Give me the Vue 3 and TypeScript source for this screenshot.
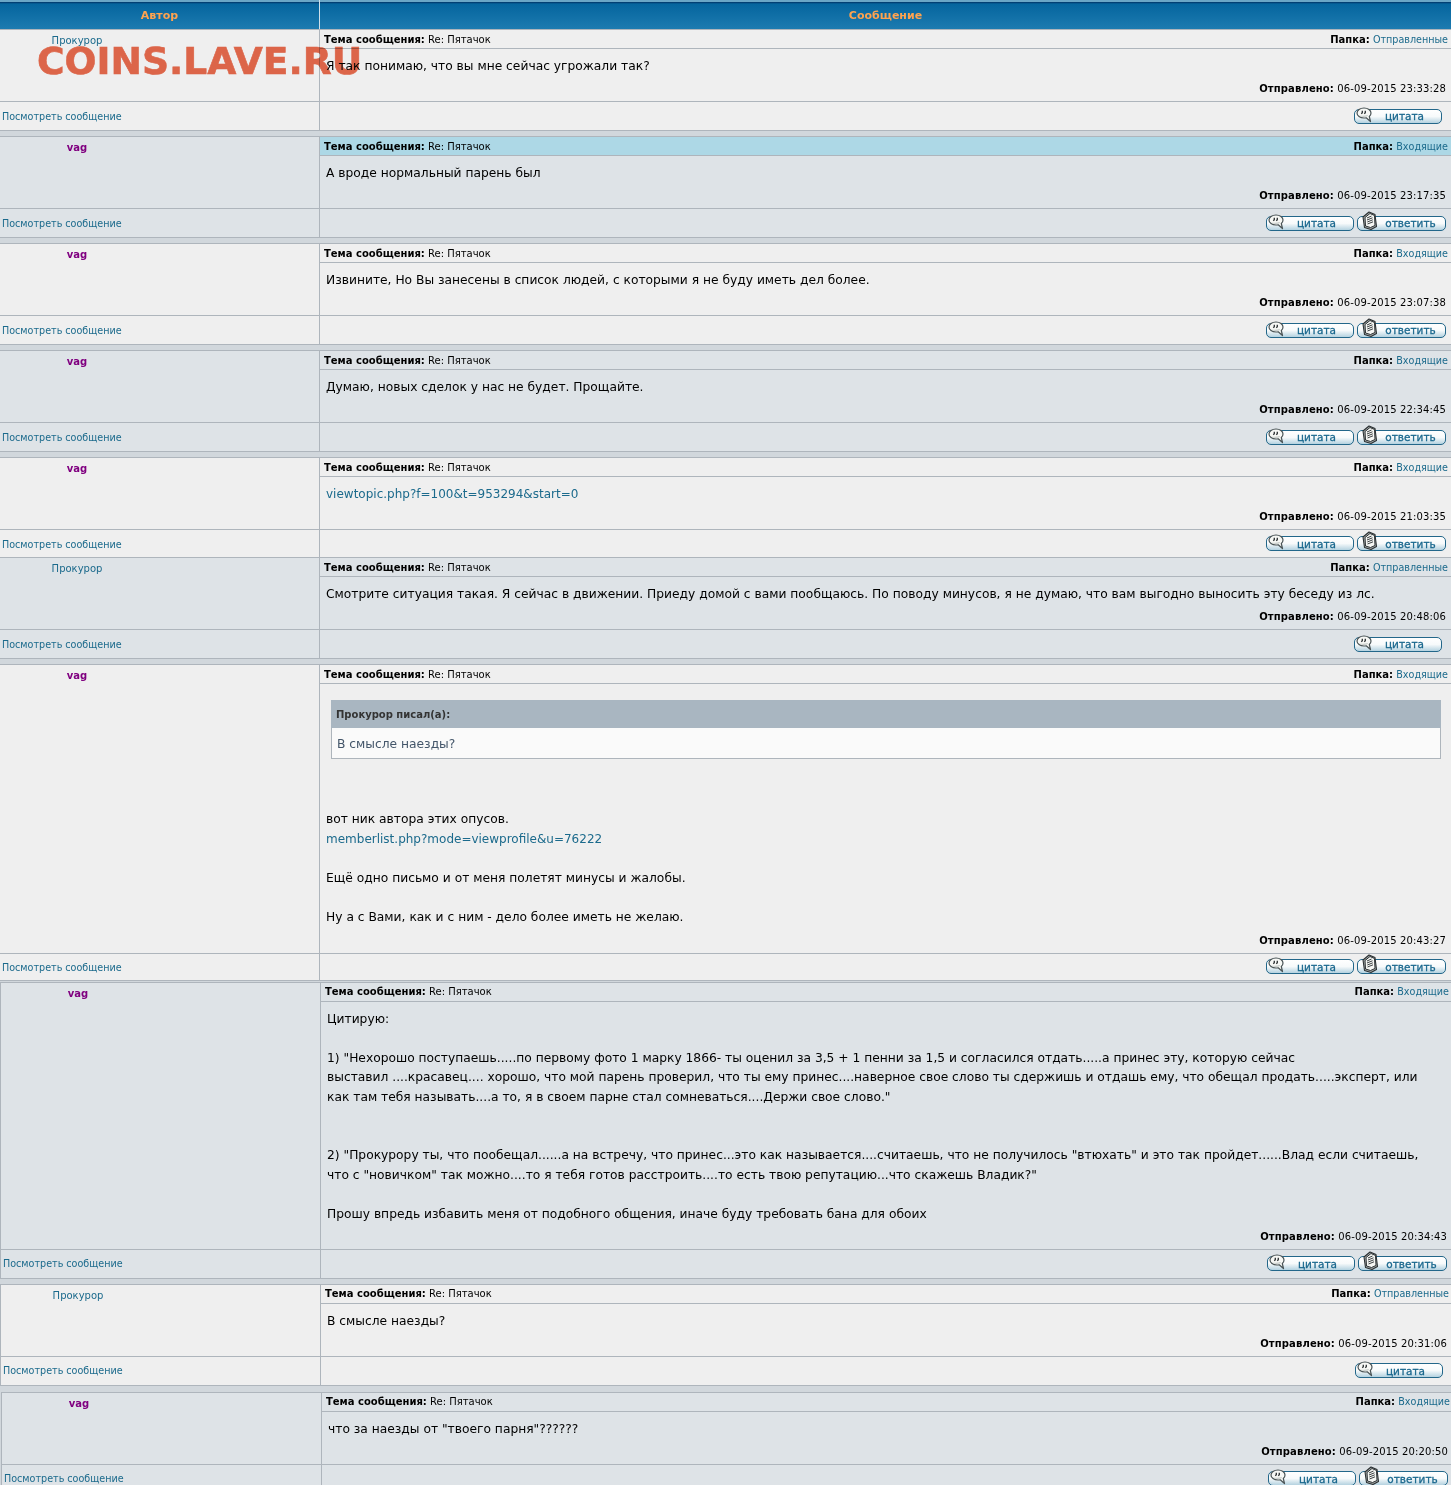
<script setup lang="ts">
interface Block { kind: 'text' | 'link' | 'quote'; text: string; author?: string }
interface Post {
  author: string; bot: boolean; folder: string; sent: string; blocks: Block[];
  reply: boolean; cls?: string; hl?: boolean;
}
const t = (text: string): Block => ({ kind: 'text', text })
const l = (text: string): Block => ({ kind: 'link', text })

const posts: Post[] = [
  { author: 'Прокурор', bot: false, folder: 'Отправленные', sent: '06-09-2015 23:33:28', reply: false, cls: 'light spaced', blocks: [t('Я так понимаю, что вы мне сейчас угрожали так?')] },
  { author: 'vag', bot: true, folder: 'Входящие', sent: '06-09-2015 23:17:35', reply: true, hl: true, cls: 'dark spaced', blocks: [t('А вроде нормальный парень был')] },
  { author: 'vag', bot: true, folder: 'Входящие', sent: '06-09-2015 23:07:38', reply: true, cls: 'light spaced', blocks: [t('Извините, Но Вы занесены в список людей, с которыми я не буду иметь дел более.')] },
  { author: 'vag', bot: true, folder: 'Входящие', sent: '06-09-2015 22:34:45', reply: true, cls: 'dark spaced', blocks: [t('Думаю, новых сделок у нас не будет. Прощайте.')] },
  { author: 'vag', bot: true, folder: 'Входящие', sent: '06-09-2015 21:03:35', reply: true, cls: 'light short', blocks: [l('viewtopic.php?f=100&t=953294&start=0')] },
  { author: 'Прокурор', bot: false, folder: 'Отправленные', sent: '06-09-2015 20:48:06', reply: false, cls: 'dark joined spaced', blocks: [t('Смотрите ситуация такая. Я сейчас в движении. Приеду домой с вами пообщаюсь. По поводу минусов, я не думаю, что вам выгодно выносить эту беседу из лс.')] },
  { author: 'vag', bot: true, folder: 'Входящие', sent: '06-09-2015 20:43:27', reply: true, cls: 'light tall', blocks: [
    { kind: 'quote', author: 'Прокурор писал(а):', text: 'В смысле наезды?' },
    t('вот ник автора этих опусов.'),
    l('memberlist.php?mode=viewprofile&u=76222'),
    t('\nЕщё одно письмо и от меня полетят минусы и жалобы.\n\nНу а с Вами, как и с ним - дело более иметь не желаю.'),
  ] },
  { author: 'vag', bot: true, folder: 'Входящие', sent: '06-09-2015 20:34:43', reply: true, cls: 'dark shift1 spaced', blocks: [
    t('Цитирую:\n\n1) "Нехорошо поступаешь.....по первому фото 1 марку 1866- ты оценил за 3,5 + 1 пенни за 1,5 и согласился отдать.....а принес эту, которую сейчас\nвыставил ....красавец.... хорошо, что мой парень проверил, что ты ему принес....наверное свое слово ты сдержишь и отдашь ему, что обещал продать.....эксперт, или\nкак там тебя называть....а то, я в своем парне стал сомневаться....Держи свое слово."\n\n\n2) "Прокурору ты, что пообещал......а на встречу, что принес...это как называется....считаешь, что не получилось "втюхать" и это так пройдет......Влад если считаешь,\nчто с "новичком" так можно....то я тебя готов расстроить....то есть твою репутацию...что скажешь Владик?"\n\nПрошу впредь избавить меня от подобного общения, иначе буду требовать бана для обоих'),
  ] },
  { author: 'Прокурор', bot: false, folder: 'Отправленные', sent: '06-09-2015 20:31:06', reply: false, cls: 'light shift1 spaced-wide', blocks: [t('В смысле наезды?')] },
  { author: 'vag', bot: true, folder: 'Входящие', sent: '06-09-2015 20:20:50', reply: true, cls: 'dark shift2', blocks: [t('что за наезды от "твоего парня"??????')] },
]
</script>

<template>
  <div class="page">
    <div class="head">
      <div class="head-cell first">Автор</div>
      <div class="head-cell">Сообщение</div>
    </div>

    <article v-for="(p, i) in posts" :key="i" class="post" :class="p.cls">
      <div class="author">
        <span class="name" :class="{ bot: p.bot }">{{ p.author }}</span>
      </div>
      <div class="message">
        <div class="subject" :class="{ hl: p.hl }">
          <span><b>Тема сообщения:</b> Re: Пятачок</span>
          <span><b>Папка:</b> <a class="folder">{{ p.folder }}</a></span>
        </div>
        <div class="content">
          <div class="blocks">
            <template v-for="(b, j) in p.blocks" :key="j">
              <div v-if="b.kind === 'quote'" class="quote">
                <div class="quote-head">{{ b.author }}</div>
                <div class="quote-body">{{ b.text }}</div>
              </div>
              <a v-else-if="b.kind === 'link'" class="body-link">{{ b.text }}</a>
              <div v-else class="body-text">{{ b.text }}</div>
            </template>
          </div>
          <div class="sent"><b>Отправлено:</b> {{ p.sent }}</div>
        </div>
      </div>
      <div class="view"><a>Посмотреть сообщение</a></div>
      <div class="actions" :class="{ single: !p.reply }">
        <a class="btn quote-btn">
          <svg class="ico" width="19" height="16" viewBox="0 0 19 16">
            <path d="M9 1C5 1 2 3.200 2 6c0 2.800 3 5 7 5 .8 0 1.500-.1 2.200-.2L15.500 14.500 14.300 9.500C15.400 8.600 16 7.400 16 6c0-2.800-3-5-7-5z" fill="#f7f8f5" stroke="#4a5456" stroke-width="1.200" stroke-linejoin="round" />
            <path d="M4 8.500c1.500 1.500 6 2 9 .5l-.5-1c-2.500 1-6 .8-8.500.5z" fill="#c9cecb" />
            <path d="M7.300 3.800v1.900l-1 1M10.300 3.800v1.900l-1 1" fill="none" stroke="#2c3133" stroke-width="1.300" />
          </svg>
          <span>цитата</span>
        </a>
        <a v-if="p.reply" class="btn reply-btn">
          <svg class="ico" width="16" height="20" viewBox="0 0 16 20">
            <path d="M7 1 13 3.500 14.500 15.500 9 18.500 2.500 16.500 1 6z" fill="#a9aeae" stroke="#2b3032" stroke-width="1.100" stroke-linejoin="round" />
            <path d="M3 6.500 8 2.500 12.500 4.500 13 14.500 8.500 16.500 3.500 15z" fill="#f6f7f4" stroke="#2b3032" stroke-width="1" stroke-linejoin="round" />
            <path d="M5 7 9.500 5M5 9 10.500 6.800M5.300 11 10.800 8.800M5.500 13 11 10.800" fill="none" stroke="#3a3f41" stroke-width="1" />
          </svg>
          <span>ответить</span>
        </a>
      </div>
    </article>

    <div class="watermark">COINS.LAVE.RU</div>
  </div>
</template>

<style>
html, body { margin: 0; overflow: hidden; background: #fff; }
</style>

<style scoped>
.page {
  position: relative;
  height: 1485px;
  width: 1451px;
  overflow: hidden;
  font-family: "DejaVu Sans", Verdana, sans-serif;
  font-size: 10px;
  color: #000;
  background: #d1d7dc;
}
.head {
  display: grid;
  grid-template-columns: 320px 1fr;
  height: 29px;
  background: linear-gradient(#6aa6c6 0, #6aa6c6 2px, #036 2px, #05659e 4px, #1d7bb0 100%);
}
.head-cell {
  display: flex;
  align-items: center;
  justify-content: center;
  padding-top: 1px;
  font-size: 11px;
  font-weight: bold;
  color: #ffa34f;
}
.head-cell.first { border-right: 1px solid #cfe0ea; box-sizing: border-box; }

.post {
  display: grid;
  grid-template-columns: 320px 1131px;
  width: 1451px;
  border-top: 1px solid #aeb5bc;
  border-bottom: 1px solid #aeb5bc;
  box-sizing: border-box;
}
.light { background: #efefef; }
.dark { background: #dee3e7; }
.spaced { margin-bottom: 5px; }
.spaced-wide { margin-bottom: 6px; }
.short .view, .short .actions { height: 27px; }
.short .view { padding-top: 1px; }
.joined { margin-top: -1px; }
.tall { margin-bottom: 1px; }
.tall .view, .tall .actions { height: 26px; }
.tall .view { padding-top: 2px; }
.tall .sent { margin-top: 5.5px; }
.shift1 { border-left: 1px solid #aeb5bc; width: 1452px; }
.shift2 { border-left: 1px solid #aeb5bc; margin-left: 1px; width: 1452px; }

.author {
  border-right: 1px solid #aeb5bc;
  border-bottom: 1px solid #aeb5bc;
  padding-top: 4px;
}
.name {
  display: block;
  width: 154px;
  text-align: center;
  line-height: 13px;
  color: #1b6a8c;
}
.name.bot { color: #800080; font-weight: bold; }

.message { border-bottom: 1px solid #aeb5bc; min-width: 0; }
.subject {
  display: flex;
  justify-content: space-between;
  align-items: center;
  height: 18px;
  padding: 0 3px 0 4px;
  border-bottom: 1px solid #aeb5bc;
  background: #efefef;
}
.dark .subject { background: #dee3e7; }
.subject.hl { background: #add8e6; }
.folder { color: #1b6a8c; font-size: 9.6px; }

.content {
  padding: 8px 5px 5px 6px;
  display: flex;
  flex-direction: column;
}
.blocks { font-size: 12.27px; line-height: 19.5px; white-space: nowrap; }
.body-text { white-space: pre-line; }
.body-link { display: block; color: #1b6a8c; font-size: 12px; }
.sent {
  margin-top: 4.5px;
  line-height: 15px;
  text-align: right;
  letter-spacing: .13px;
}

.quote { margin: 8px 5px 51px 5px; }
.quote-head {
  height: 28px;
  line-height: 30px;
  padding-left: 5px;
  background: #a9b6c1;
  color: #333;
  font-size: 10px;
  font-weight: bold;
}
.quote-body {
  height: 28px;
  padding: 2px 0 0 5px;
  line-height: 28px;
  background: #fafafa;
  border: 1px solid #aeb5bc;
  border-top: none;
  color: #44566a;
}

.view, .actions { height: 28px; display: flex; align-items: center; box-sizing: border-box; }
.view {
  border-right: 1px solid #aeb5bc;
  padding-left: 2px;
  color: #1b6a8c;
  font-size: 9.6px;
}
.actions { justify-content: flex-end; gap: 3px; padding-right: 5px; }
.actions.single { padding-right: 9px; }
.btn {
  position: relative;
  display: flex;
  align-items: center;
  justify-content: center;
  box-sizing: border-box;
  width: 88px;
  height: 15px;
  border: 1px solid #23678a;
  border-radius: 5px;
  background: linear-gradient(#fff 0, #f7fafb 50%, #b4d2e0 100%);
  color: #1a688e;
  font-size: 10.5px;
  line-height: 12px;
  -webkit-text-stroke: .3px #1a688e;
}
.btn span { padding-left: 13px; }
.reply-btn { width: 89px; }
.reply-btn span { padding-left: 18px; }
.ico { position: absolute; left: 0; top: -3px; }
.reply-btn .ico { left: 4px; top: -6px; }

.watermark {
  position: absolute;
  left: 37px;
  top: 40px;
  font-size: 37.6px;
  line-height: 43px;
  font-weight: bold;
  color: #eb6c4e;
  -webkit-text-stroke: .6px #eb6c4e;
  mix-blend-mode: multiply;
  white-space: nowrap;
}
</style>
